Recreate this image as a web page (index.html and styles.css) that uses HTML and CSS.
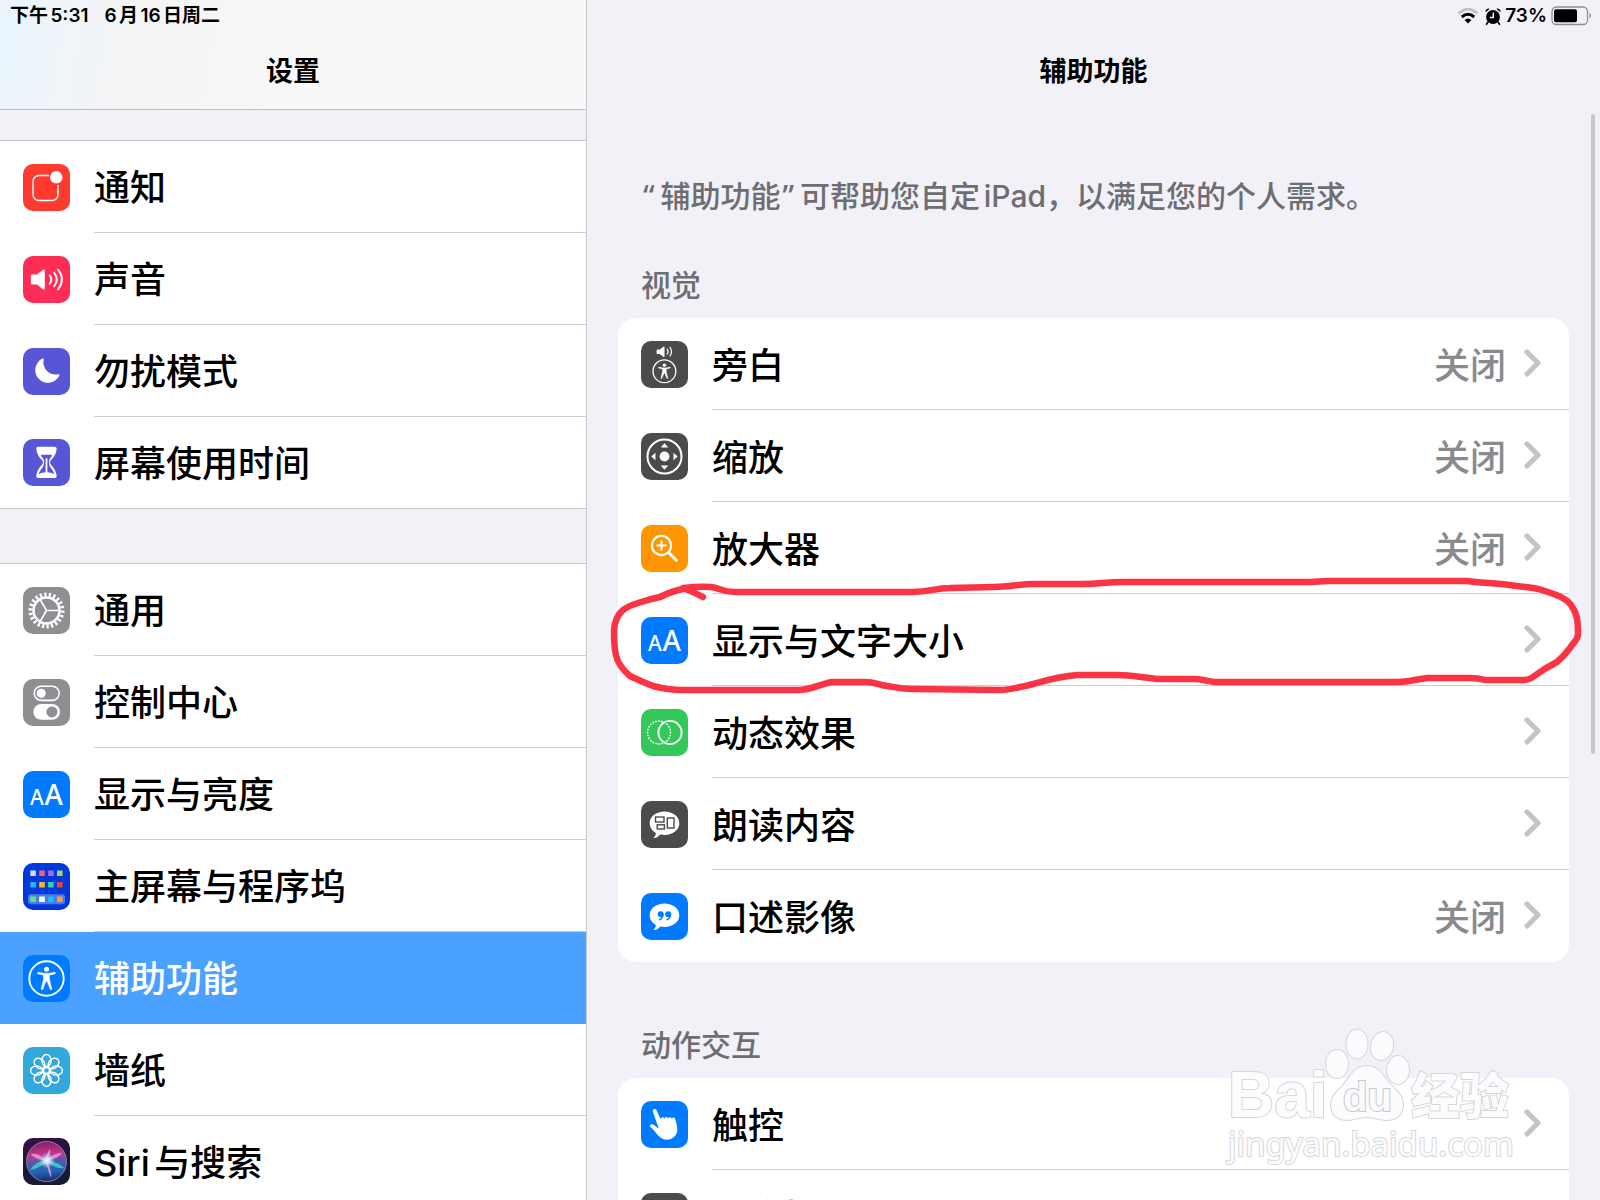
FILE: index.html
```html
<!DOCTYPE html>
<html lang="zh-CN">
<head>
<meta charset="utf-8">
<meta name="viewport" content="width=device-width, initial-scale=1">
<title>设置</title>
<link rel="stylesheet" href="styles.css">
</head>
<body>
<svg class="defs" aria-hidden="true">
  <symbol id="person" viewBox="0 0 47 47">
    <circle cx="23.5" cy="23.5" r="17.2" fill="none" stroke="#fff" stroke-width="1.9"/>
    <circle cx="23.5" cy="14.2" r="2.5" fill="#fff"/>
    <path fill="#fff" stroke="#fff" stroke-width=".4" d="M15.4 17.2l5.600 1h5l5.600-1c1.200-.2 1.400 1.400.3 1.700l-5.400 1.300v4l2.300 9.400c.3 1.300-1.200 1.700-1.700.5l-3-7.500h-1.200l-3 7.500c-.5 1.200-2 .8-1.700-.5l2.300-9.400v-4l-5.400-1.300c-1.100-.3-.9-1.900.3-1.700z"/>
  </symbol>
  <symbol id="text-size" viewBox="0 0 47 47">
    <text class="glyph" x="7" y="33.500" font-size="21">A</text>
    <text class="glyph" x="21.500" y="33.500" font-size="28">A</text>
  </symbol>
  <symbol id="bubble" viewBox="0 0 47 47">
    <path fill="#fff" d="M23.500 10.500c8.300 0 14.800 5 14.800 11.700s-6.500 11.700-14.800 11.700c-1.500 0-3-.2-4.300-.5-1.500 1.800-3.500 3.400-5.600 3.700-.8.100-1-.5-.5-1 1.200-1.300 1.800-2.800 1.700-4.200-3.800-2.100-6.100-5.600-6.100-9.700 0-6.700 6.500-11.700 14.800-11.700z"/>
  </symbol>
  <symbol id="chevron" viewBox="0 0 18 28">
    <path d="M3 3l11 11L3 25" fill="none" stroke="#c4c4c7" stroke-width="5.200" stroke-linecap="round" stroke-linejoin="round"/>
  </symbol>
</svg>

<div class="app">
  <aside class="sidebar">
    <header class="bar bar-side">
      <div class="status"><span>下午5:31</span><span>6月16日周二</span></div>
      <h1 class="title">设置</h1>
    </header>
    <nav class="menu">
      <ul class="group">
        <li><a class="item" href="#notifications">
          <svg class="icon red" viewBox="0 0 47 47"><path d="M26 11.500H16a6 6 0 0 0-6 6v13a6 6 0 0 0 6 6h13a6 6 0 0 0 6-6V21" fill="none" stroke="#fff" stroke-width="1.400"/><circle cx="33.300" cy="13.300" r="6.200" fill="#fff"/></svg>
          <span class="item-body">通知</span></a></li>
        <li><a class="item" href="#sounds">
          <svg class="icon pink" viewBox="0 0 47 47"><path fill="#fff" d="M9.500 18.500H14l5.700-4.600c1.100-.9 2.100-.5 2.100.7v18c0 1.200-1 1.600-2.100.7L14 28.600H9.500c-1.100 0-1.700-.6-1.700-1.700v-6.700c0-1.100.6-1.700 1.700-1.700z"/><path d="M26.700 19.300q3.200 4.200 0 8.400M31 16.500q5.500 7 0 14M35 13.700q8 9.800 0 19.600" fill="none" stroke="#fff" stroke-width="1.900" stroke-linecap="round"/></svg>
          <span class="item-body">声音</span></a></li>
        <li><a class="item" href="#dnd">
          <svg class="icon indigo" viewBox="0 0 47 47"><path fill="#fff" d="M19.500 10.600c.9-.5 1.500.1 1.200 1A12.200 12.200 0 0 0 35.300 26.200c1-.3 1.500.4 1.100 1.300A12.700 12.700 0 1 1 19.500 10.600z"/></svg>
          <span class="item-body">勿扰模式</span></a></li>
        <li><a class="item" href="#screen-time">
          <svg class="icon indigo" viewBox="0 0 47 47"><path fill="#fff" d="M15.500 7.800h16c1.800 0 2.400 1.200 2.100 2.900-.9 5.300-3.200 7.700-5.400 10.100-1.500 1.600-1.500 3.700 0 5.300 2.200 2.400 4.500 4.900 5.400 10.100.3 1.700-.3 2.900-2.100 2.900h-16c-1.800 0-2.400-1.200-2.100-2.900.9-5.200 3.200-7.700 5.400-10.100 1.500-1.600 1.500-3.700 0-5.300-2.200-2.400-4.500-4.800-5.400-10.100-.3-1.700.3-2.900 2.100-2.900z"/><path fill="#5856d6" d="M19 15.800h9c1.300 0 1.200 1 .5 1.800-2 2-2.500 3.200-2.500 6.200 0 3.500 1.800 5.200 3.300 7.300 1 1.400 1.600 2.700 2 4.300-2-1.300-4.700-2-6.900-2.100V19.200h-1.800v14.100c-2.200.1-4.900.8-6.900 2.100.4-1.600 1-2.900 2-4.300 1.500-2.100 3.300-3.800 3.300-7.300 0-3-.5-4.200-2.500-6.200-.7-.8-.8-1.800.5-1.800z"/></svg>
          <span class="item-body">屏幕使用时间</span></a></li>
      </ul>
      <ul class="group">
        <li><a class="item" href="#general">
          <svg class="icon gray" viewBox="0 0 47 47"><g fill="none" stroke="#fff"><circle cx="23.500" cy="23.500" r="16" stroke-width="4" pathLength="44" stroke-dasharray="1 1"/><circle cx="23.500" cy="23.500" r="13" stroke-width="2.500"/><path d="M23.500 23.500H36M23.500 23.500L17.200 12.600M23.500 23.500L17.200 34.400" stroke-width="1.700"/></g></svg>
          <span class="item-body">通用</span></a></li>
        <li><a class="item" href="#control-center">
          <svg class="icon gray" viewBox="0 0 47 47"><rect x="11.200" y="7.200" width="25" height="14.200" rx="7.100" fill="none" stroke="#fff" stroke-width="1.600"/><circle cx="18.200" cy="14.300" r="4.600" fill="#fff"/><rect x="10.400" y="25" width="26.600" height="15.800" rx="7.900" fill="#fff"/><circle cx="28.900" cy="32.900" r="5.500" fill="#8e8e93"/></svg>
          <span class="item-body">控制中心</span></a></li>
        <li><a class="item" href="#display">
          <svg class="icon blue"><use href="#text-size"/></svg>
          <span class="item-body">显示与亮度</span></a></li>
        <li><a class="item" href="#home-screen">
          <svg class="icon navy" viewBox="0 0 47 47"><rect x="5" y="31.300" width="37" height="10" rx="3" fill="#4d7bea"/><g><path fill="#d5dbe8" d="M7.300 7.500h5.600v5.600H7.300z"/><path fill="#ff5b72" d="M16.200 7.500h5.600v5.600h-5.600z"/><path fill="#a865f8" d="M25.100 7.500h5.600v5.600h-5.600z"/><path fill="#a6d35c" d="M34 7.500h5.600v5.600H34z"/><path fill="#23b7f7" d="M7.300 19h5.600v5.600H7.300z"/><path fill="#ffb91e" d="M16.200 19h5.600v5.600h-5.600z"/><path fill="#2fd3b4" d="M25.100 19h5.600v5.600h-5.600z"/><path fill="#fb3a3e" d="M34 19h5.600v5.600H34z"/><path fill="#63e77d" d="M7.300 33.500h5.600v5.600H7.300z"/><path fill="#fff" d="M16.200 33.500h5.600v5.600h-5.600z"/><path fill="#1cc0ff" d="M25.100 33.500h5.600v5.600h-5.600z"/><path fill="#f99a4d" d="M34 33.500h5.600v5.600H34z"/></g></svg>
          <span class="item-body">主屏幕与程序坞</span></a></li>
        <li><a class="item selected" href="#accessibility" aria-current="page">
          <svg class="icon blue"><use href="#person"/></svg>
          <span class="item-body">辅助功能</span></a></li>
        <li><a class="item" href="#wallpaper">
          <svg class="icon cyan" viewBox="0 0 47 47"><g fill="none" stroke="#fff" stroke-width="1.500"><g id="petals"><ellipse cx="23.500" cy="13.600" rx="4.600" ry="6"/><ellipse cx="23.500" cy="33.400" rx="4.600" ry="6"/><ellipse cx="13.600" cy="23.500" rx="6" ry="4.600"/><ellipse cx="33.400" cy="23.500" rx="6" ry="4.600"/></g><use href="#petals" transform="rotate(45 23.500 23.500)"/><circle cx="23.500" cy="23.500" r="3"/></g></svg>
          <span class="item-body">墙纸</span></a></li>
        <li><a class="item" href="#siri">
          <svg class="icon siri" viewBox="0 0 47 47">
            <defs>
              <linearGradient id="orb" x1=".4" y1="0" x2=".5" y2="1"><stop offset="0" stop-color="#7c2064"/><stop offset=".3" stop-color="#c43488"/><stop offset=".5" stop-color="#5f55ac"/><stop offset=".75" stop-color="#1f66b8"/><stop offset="1" stop-color="#1c2a5e"/></linearGradient>
              <radialGradient id="core"><stop offset="0" stop-color="#fff"/><stop offset=".4" stop-color="#d8f2ff" stop-opacity=".8"/><stop offset="1" stop-color="#7fd4ff" stop-opacity="0"/></radialGradient>
            </defs>
            <circle cx="23.500" cy="23.500" r="20" fill="url(#orb)" stroke="#8b7fa8" stroke-width="1"/>
            <path fill="#35d6c8" opacity=".85" d="M23 22C16 23 10 27 7 32c6-1 13-4 17-9zM24 23c5 5 11 8 17 7-4-4-10-7-17-7z"/>
            <path fill="#f0a0dc" opacity=".8" d="M23 23c0-5 1-8 4-12 1 5-1 9-3 12zM23 23c1 6 3 12 5 17 1-7-2-13-5-17zM24 22c5-5 9-7 15-7-3 4-9 7-15 7zM22 22c-4-5-9-7-14-6 3 4 8 6 14 6z"/>
            <circle cx="24" cy="22.500" r="8" fill="url(#core)"/>
          </svg>
          <span class="item-body">Siri与搜索</span></a></li>
      </ul>
    </nav>
  </aside>

  <main class="detail">
    <header class="bar">
      <div class="status status-right">
        <svg class="wifi" viewBox="0 0 22 16" aria-label="Wi-Fi"><path d="M1.500 5.200Q11-3 20.500 5.200" fill="none" stroke="#c2c2c6" stroke-width="2.800"/><path d="M4.800 9Q11 3.600 17.200 9" fill="none" stroke="#000" stroke-width="3"/><path d="M7.600 12Q11 9 14.400 12L11 15.600z"/></svg>
        <svg class="alarm" viewBox="0 0 16 17"><circle cx="8" cy="9" r="6.900"/><path d="M.6 4.300A3 3 0 0 1 4.700.8zM15.400 4.300A3 3 0 0 0 11.300.8z"/><path d="M3 14l-1.500 2.300M13 14l1.500 2.300" stroke="#000" stroke-width="1.600" stroke-linecap="round"/><path d="M8.300 4.500v5H4.800" fill="none" stroke="#f2f1f7" stroke-width="1.500"/></svg>
        <span>73%</span>
        <svg class="battery" viewBox="0 0 42 20"><rect x="1" y="1" width="35.500" height="17.500" rx="4.500" fill="none" stroke="#8d8d92" stroke-width="1.300"/><rect x="3" y="3.200" width="23" height="13" rx="2"/><path d="M38.500 6.500q3 3.200 0 6.500z" fill="#8d8d92"/></svg>
      </div>
      <h1 class="title">辅助功能</h1>
    </header>

    <div class="content">
      <p class="intro"><span class="quote">“</span>辅助功能<span class="quote">”</span>可帮助您自定iPad，以满足您的个人需求。</p>

      <section class="section">
        <h2 class="section-title">视觉</h2>
        <ul class="card">
          <li><a class="item" href="#voiceover">
            <svg class="icon dark" viewBox="0 0 47 47"><path fill="#fff" d="M16.500 8.500h2.300l3.500-2.800c.7-.5 1.200-.3 1.200.4v9.200c0 .7-.5.9-1.200.4l-3.500-2.800h-2.300c-.6 0-.9-.3-.9-.9V9.400c0-.6.300-.9.900-.9z"/><path d="M26.200 8.200q1.700 2.500 0 5M29 6.300q3 4.300 0 8.700" fill="none" stroke="#fff" stroke-width="1.200" stroke-linecap="round"/><use href="#person" x="7.800" y="14.700" width="31.200" height="31.200"/></svg>
            <span class="item-body"><span class="label">旁白</span><span class="value">关闭</span><svg class="chevron"><use href="#chevron"/></svg></span></a></li>
          <li><a class="item" href="#zoom">
            <svg class="icon dark" viewBox="0 0 47 47"><circle cx="23.500" cy="23.500" r="17" fill="none" stroke="#fff" stroke-width="2"/><g fill="#fff"><circle cx="23.500" cy="23.500" r="4.900"/><path d="M23.500 10.300l3.800 4.200h-7.600zM23.500 36.700l3.800-4.200h-7.600zM10.300 23.500l4.200-3.800v7.600zM36.700 23.500l-4.200-3.800v7.600z"/></g></svg>
            <span class="item-body"><span class="label">缩放</span><span class="value">关闭</span><svg class="chevron"><use href="#chevron"/></svg></span></a></li>
          <li><a class="item" href="#magnifier">
            <svg class="icon orange" viewBox="0 0 47 47"><g fill="none" stroke="#fff" stroke-width="2.200" stroke-linecap="round"><circle cx="20.500" cy="20.500" r="9.600"/><path d="M20.500 16.300v8.400M16.300 20.500h8.400"/><path d="M28 28l7.300 7.300" stroke-width="3"/></g></svg>
            <span class="item-body"><span class="label">放大器</span><span class="value">关闭</span><svg class="chevron"><use href="#chevron"/></svg></span></a></li>
          <li class="marked"><a class="item" href="#text-display">
            <svg class="icon blue"><use href="#text-size"/></svg>
            <span class="item-body"><span class="label">显示与文字大小</span><svg class="chevron"><use href="#chevron"/></svg></span></a>
            <svg class="scribble" viewBox="600 575 987 128" preserveAspectRatio="none" aria-hidden="true"><path d="M703 597Q694 592 683 588C692 587 702 586 711 587C720 588 722 592 735 592H913C930 592 935 588 950 588L995 587C1010 587 1018 584 1035 584H1083C1100 584 1105 582 1123 582H1310C1318 582 1320 581 1328 581H1467C1480 583 1495 583 1510 585C1522 587 1532 587 1542 590C1554 594 1565 597 1571 605C1577 613 1578 620 1578 635C1577 641 1573 643 1570 648Q1564 656 1557 662Q1545 668 1533 677Q1529 680 1523 680H1485Q1478 678 1470 678H1427C1417 679 1410 682 1398 682H1215C1205 681 1203 679 1193 679H1158C1145 678 1132 675 1117 675H1077C1050 677 1035 685 1020 687C1012 689 1008 690 1000 690L912 689C900 689 895 687 887 686C878 685 875 682 866 682H832C820 684 812 690 798 690H683Q668 690 653 686Q640 681 630 676Q618 666 616 655Q614 648 614 630Q615 617 623 610Q628 606 638 603Q650 599 660 597Q672 591 683 589" fill="none" stroke="#fb3445" stroke-width="6.500" stroke-linecap="round" stroke-linejoin="round"/></svg></li>
          <li><a class="item" href="#motion">
            <svg class="icon green" viewBox="0 0 47 47"><g fill="none" stroke="#fff"><circle cx="18" cy="23.500" r="11.500" stroke-width="1.900" stroke-linecap="round" pathLength="24" stroke-dasharray="0 1"/><circle cx="29" cy="23.500" r="11.600" stroke-width="1.900"/></g></svg>
            <span class="item-body"><span class="label">动态效果</span><svg class="chevron"><use href="#chevron"/></svg></span></a></li>
          <li><a class="item" href="#spoken-content">
            <svg class="icon dark" viewBox="0 0 47 47"><use href="#bubble"/><g fill="none" stroke="#4b4b4b" stroke-width="1.400"><rect x="14.500" y="16" width="8.500" height="5"/><rect x="16.200" y="23.800" width="7.200" height="4.200"/><rect x="26.300" y="17" width="6.700" height="10"/></g></svg>
            <span class="item-body"><span class="label">朗读内容</span><svg class="chevron"><use href="#chevron"/></svg></span></a></li>
          <li><a class="item" href="#audio-descriptions">
            <svg class="icon blue" viewBox="0 0 47 47"><use href="#bubble"/><g fill="#007aff"><circle cx="19.700" cy="21.200" r="3"/><circle cx="27.200" cy="21.200" r="3"/></g><path d="M22 21.500q0 3.800-3.500 5.200M29.500 21.500q0 3.800-3.500 5.200" fill="none" stroke="#007aff" stroke-width="1.400" stroke-linecap="round"/></svg>
            <span class="item-body"><span class="label">口述影像</span><span class="value">关闭</span><svg class="chevron"><use href="#chevron"/></svg></span></a></li>
        </ul>
      </section>

      <section class="section">
        <h2 class="section-title">动作交互</h2>
        <ul class="card">
          <li><a class="item" href="#touch">
            <svg class="icon blue" viewBox="0 0 47 47"><path fill="#fff" d="M11.800 10.300c-.7-2.200 2.700-3.300 3.600-1.200l4.500 9.600c-.4-2.600 2.500-3.300 3.600-.9.200-2.200 3-2.500 3.800-.2.400-1.900 3-1.900 3.600.1.700-1.900 3-1.400 3.400.6 1 4 2.300 7.400 2 11.200-.3 5-5.200 9.400-10.600 9.200-4.200-.1-7.300-2.500-10.300-6.200-2-2.600-3.700-4.600-6.200-6.700-1.300-1.200.5-3.200 2.300-2.500 2.200.9 4 3 6.200 4.300z"/></svg>
            <span class="item-body"><span class="label">触控</span><svg class="chevron"><use href="#chevron"/></svg></span></a></li>
          <li><a class="item" href="#switch-control">
            <svg class="icon dark" viewBox="0 0 47 47"><rect x="10" y="10" width="27" height="27" rx="3" fill="none" stroke="#fff" stroke-width="2"/></svg>
            <span class="item-body"><span class="label">切换控制</span><span class="value">关闭</span><svg class="chevron"><use href="#chevron"/></svg></span></a></li>
        </ul>
      </section>
    </div>

    <div class="scroll-thumb"></div>
    <svg class="watermark" viewBox="0 0 300 150">
      <g class="mark">
        <text class="mark-latin" x="3" y="92" font-size="64">Bai</text>
        <text class="mark-cjk" x="186" y="89" font-size="49">经验</text>
        <ellipse cx="112" cy="39" rx="11" ry="14"/><ellipse cx="132" cy="19" rx="10.500" ry="14.500"/><ellipse cx="157" cy="21" rx="11" ry="14" transform="rotate(12 157 21)"/><ellipse cx="173" cy="45" rx="11" ry="14"/>
        <path d="M142 41c12 0 16 10 23 18 7 7 13 12 13 21 0 11-8 15-17 15-7 0-11-3-19-3s-12 3-19 3c-9 0-17-4-17-15 0-9 7-14 13-21 7-8 11-18 23-18z"/>
        <text class="mark-latin mark-du" x="118" y="86" font-size="40">du</text>
        <text class="mark-url" x="3" y="131" font-size="33">jingyan.baidu.com</text>
      </g>
    </svg>
  </main>
</div>
</body>
</html>
```
FILE: styles.css
```css
* {
  box-sizing: border-box;
}

body {
  margin: 0;
  background: #f2f1f7;
  color: #000;
  font-family: Inter, "Noto Sans CJK SC", sans-serif;
  text-autospace: normal;
}

ul {
  margin: 0;
  padding: 0;
  list-style: none;
}

.defs {
  position: absolute;
  width: 0;
  height: 0;
}

.app {
  display: grid;
  grid-template-columns: 587px 1fr;
  height: 100vh;
  overflow: hidden;
}

.sidebar {
  border-right: 1px solid #c8c7cc;
  overflow: hidden;
}

.detail {
  position: relative;
  overflow: hidden;
}

/* Header bars */
.bar {
  height: 110px;
}

.bar-side {
  border-bottom: 1px solid #bfbfc3;
  background: linear-gradient(100deg, #e9f4fd 0, #eff5f9 70px, #f4f4f4 140px, #f8f8f8 300px);
}

.status {
  display: flex;
  align-items: center;
  gap: 16px;
  height: 32px;
  padding-left: 10px;
  font-size: 19px;
  font-weight: 600;
  line-height: 32px;
}

.status-right {
  justify-content: flex-end;
  gap: 4px;
  padding-right: 7px;
}

.wifi {
  width: 22px;
  height: 16px;
  margin-right: 2px;
}

.alarm {
  width: 16px;
  height: 17px;
}

.battery {
  width: 42px;
  height: 20px;
}

.title {
  margin: 0;
  font-size: 27px;
  font-weight: 600;
  line-height: 80px;
  text-align: center;
}

/* Rows, shared by the sidebar and the cards */
.item {
  display: flex;
  gap: 24px;
  align-items: center;
  height: 92px;
  padding-left: 23px;
  color: #000;
  font-size: 36px;
  font-weight: 500;
  text-decoration: none;
}

.item-body {
  display: flex;
  flex: 1;
  align-items: center;
  gap: 18px;
  height: 92px;
  padding-bottom: 4px;
  border-bottom: 1px solid #cfcfd3;
}

.icon {
  flex: none;
  width: 47px;
  height: 47px;
  border-radius: 10px;
}

.red { background: #ff3b30; }
.pink { background: #ff2d55; }
.indigo { background: #5856d6; }
.gray { background: #8e8e93; }
.blue { background: #007aff; }
.navy { background: #0039d8; }
.cyan { background: #32a9dc; }
.dark { background: #4b4b4b; }
.orange { background: #ff9500; }
.green { background: #34c759; }
.siri { background: linear-gradient(160deg, #3c0e48, #161a33 60%); }

.glyph {
  fill: #fff;
  font-family: "Noto Sans", sans-serif;
  font-weight: 500;
}

/* Sidebar groups */
.group {
  margin-top: 30px;
  border-top: 1px solid #c8c7cc;
  border-bottom: 1px solid #c8c7cc;
  background: #fff;
}

.group + .group {
  margin-top: 54px;
}

.group li:last-child .item {
  height: 91px;
}

.group li:last-child .item-body {
  border-bottom: 0;
}

.selected {
  background: #4ba1ff;
  color: #fff;
}

.selected .item-body {
  border-bottom-color: #4ba1ff;
}

/* Detail pane */
.content {
  padding: 66px 31px 0;
}

.intro,
.section-title {
  margin: 0;
  padding-left: 23px;
  color: #6d6d72;
  font-size: 30px;
  font-weight: 500;
  line-height: 40px;
}

.intro {
  margin-bottom: 49px;
}

.quote {
  padding: 0 6px 0 2px;
  font-family: "Noto Sans", sans-serif;
}

.section + .section {
  margin-top: 63px;
}

.section-title {
  margin-bottom: 13px;
}

.card {
  border-radius: 18px;
  background: #fff;
}

.card .item-body {
  padding-right: 27px;
  padding-bottom: 2px;
}

.card li:last-child .item-body {
  border-bottom: 0;
}

.label {
  flex: 1;
}

.value {
  color: #8a8a8e;
}

.chevron {
  width: 18px;
  height: 28px;
}

/* Hand-drawn ring over one row */
.marked {
  position: relative;
  z-index: 1;
}

.scribble {
  position: absolute;
  top: -19px;
  left: -18px;
  width: calc(100% + 36px);
  height: 128px;
  pointer-events: none;
}

.scroll-thumb {
  position: absolute;
  top: 114px;
  right: 5px;
  width: 4px;
  height: 640px;
  border-radius: 2px;
  background: #c7c7cc;
}

.watermark {
  position: absolute;
  right: 75px;
  bottom: 25px;
  width: 300px;
  height: 150px;
  pointer-events: none;
}

.mark {
  fill: #fcfcfe;
  stroke: #d6d6da;
  stroke-width: 2px;
  paint-order: stroke;
}

.mark-latin {
  font-family: "Liberation Sans", sans-serif;
  font-weight: 700;
}

.mark-du {
  stroke: #c8c8cc;
}

.mark-cjk {
  font-family: "Noto Sans CJK SC", sans-serif;
  font-weight: 900;
}

.mark-url {
  font-family: "Noto Sans", sans-serif;
}
```
